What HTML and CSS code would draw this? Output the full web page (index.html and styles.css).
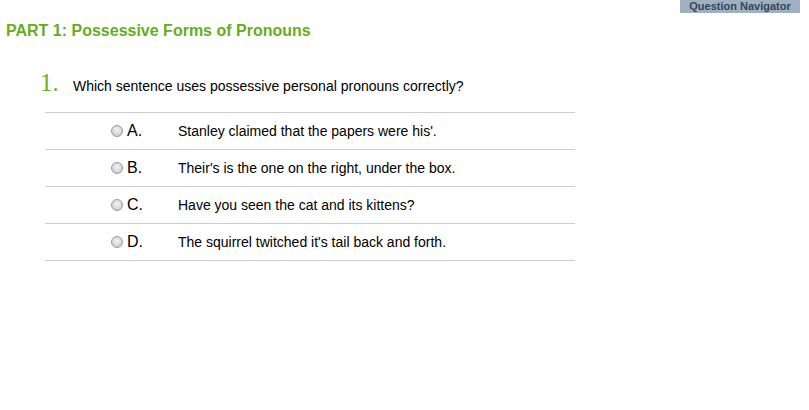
FILE: index.html
```html
<!DOCTYPE html>
<html>
<head>
<meta charset="utf-8">
<link rel="stylesheet" href="styles.css">
</head>
<body>
<div class="topbar"><span class="nav">Question Navigator</span></div>
<h1 class="part">PART 1: Possessive Forms of Pronouns</h1>
<div class="question">
  <div class="qhead"><span class="qnum">1.</span><span class="qtext">Which sentence uses possessive personal pronouns correctly?</span></div>
  <ul class="options">
    <li class="opt"><span class="radio"></span><span class="letter">A.</span><span class="otext">Stanley claimed that the papers were his'.</span></li>
    <li class="opt"><span class="radio"></span><span class="letter">B.</span><span class="otext">Their's is the one on the right, under the box.</span></li>
    <li class="opt"><span class="radio"></span><span class="letter">C.</span><span class="otext">Have you seen the cat and its kittens?</span></li>
    <li class="opt"><span class="radio"></span><span class="letter">D.</span><span class="otext">The squirrel twitched it's tail back and forth.</span></li>
  </ul>
</div>
</body>
</html>
```
FILE: styles.css
```css
* { box-sizing: border-box; }
html, body { margin: 0; padding: 0; background: #fff; }
body { font-family: "Liberation Sans", Arial, sans-serif; color: #000; width: 809px; height: 410px; overflow: hidden; }
.topbar { display: flex; justify-content: flex-end; padding-right: 9px; height: 13px; }
.nav { display: block; background: #9fb0c1; color: #34465a; font-weight: bold; font-size: 11px; line-height: 13px; height: 13px; width: 120px; white-space: nowrap; text-align: center; padding-bottom: 0; }
.part { margin: 8px 0 0 6px; font-size: 16px; line-height: 20px; color: #67ad1b; font-weight: bold; }
.question { margin: 28px 0 0 45px; width: 530px; }
.qhead { display: flex; align-items: baseline; height: 32px; margin-left: -5px; }
.qnum { font-family: "Liberation Serif", "Times New Roman", serif; color: #6ab01e; font-size: 25px; width: 33px; }
.qtext { font-size: 14px; }
.options { list-style: none; margin: 11px 0 0 0; padding: 0; border-top: 1px solid #cccccc; }
.opt { display: flex; align-items: center; height: 37px; border-bottom: 1px solid #cccccc; padding-left: 66px; }
.radio { width: 12px; height: 12px; border-radius: 50%; border: 1px solid #9a9a9a; background: radial-gradient(circle at 50% 40%, #f4f4f4 0%, #d6d6d6 60%, #c4c4c4 100%); margin-right: 4px; }
.letter { font-size: 16px; width: 51px; }
.otext { font-size: 14px; }
```
